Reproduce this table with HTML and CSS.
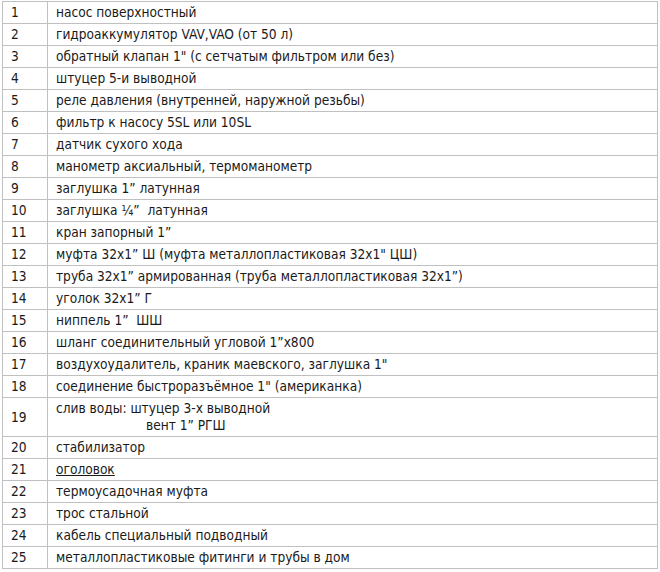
FILE: index.html
```html
<!DOCTYPE html>
<html lang="ru">
<head>
<meta charset="utf-8">
<link rel="stylesheet" href="styles.css">
</head>
<body>
<table class="spec">
<tr><td class="num">1</td><td class="name">насос поверхностный</td></tr>
<tr><td class="num">2</td><td class="name">гидроаккумулятор VAV,VAO (от 50 л)</td></tr>
<tr><td class="num">3</td><td class="name">обратный клапан 1" (с сетчатым фильтром или без)</td></tr>
<tr><td class="num">4</td><td class="name">штуцер 5-и выводной</td></tr>
<tr><td class="num">5</td><td class="name">реле давления (внутренней, наружной резьбы)</td></tr>
<tr><td class="num">6</td><td class="name">фильтр к насосу 5SL или 10SL</td></tr>
<tr><td class="num">7</td><td class="name">датчик сухого хода</td></tr>
<tr><td class="num">8</td><td class="name">манометр аксиальный, термоманометр</td></tr>
<tr><td class="num">9</td><td class="name">заглушка 1” латунная</td></tr>
<tr><td class="num">10</td><td class="name">заглушка ¼”  латунная</td></tr>
<tr><td class="num">11</td><td class="name">кран запорный 1”</td></tr>
<tr><td class="num">12</td><td class="name">муфта 32х1” Ш (муфта металлопластиковая 32х1" ЦШ)</td></tr>
<tr><td class="num">13</td><td class="name">труба 32х1” армированная (труба металлопластиковая 32х1”)</td></tr>
<tr><td class="num">14</td><td class="name">уголок 32х1” Г</td></tr>
<tr><td class="num">15</td><td class="name">ниппель 1”  ШШ</td></tr>
<tr><td class="num">16</td><td class="name">шланг соединительный угловой 1”х800</td></tr>
<tr><td class="num">17</td><td class="name">воздухоудалитель, краник маевского, заглушка 1"</td></tr>
<tr><td class="num">18</td><td class="name">соединение быстроразъёмное 1" (американка)</td></tr>
<tr><td class="num">19</td><td class="name">слив воды: штуцер 3-х выводной<br><span class="indent">вент 1” РГШ</span></td></tr>
<tr><td class="num">20</td><td class="name">стабилизатор</td></tr>
<tr><td class="num">21</td><td class="name"><span class="link">оголовок</span></td></tr>
<tr><td class="num">22</td><td class="name">термоусадочная муфта</td></tr>
<tr><td class="num">23</td><td class="name">трос стальной</td></tr>
<tr><td class="num">24</td><td class="name">кабель специальный подводный</td></tr>
<tr><td class="num">25</td><td class="name">металлопластиковые фитинги и трубы в дом</td></tr>
</table>
</body>
</html>
```
FILE: styles.css
```css
html, body {
  margin: 0;
  padding: 0;
  background: #ffffff;
}
.spec {
  margin: 1px 0 0 2px;
  width: 656px;
  border-collapse: collapse;
  font-family: "DejaVu Sans Condensed", "DejaVu Sans", sans-serif;
  font-size: 13.6px;
  color: #1a1a1a;
  table-layout: fixed;
}
.spec td {
  border: 1px solid #c0c0c0;
  padding: 2px 8px;
  line-height: 17px;
  vertical-align: middle;
  white-space: pre-wrap;
}
.spec .num {
  width: 28px;
}
.indent {
  padding-left: 90px;
}
.link {
  text-decoration: underline;
}
```
